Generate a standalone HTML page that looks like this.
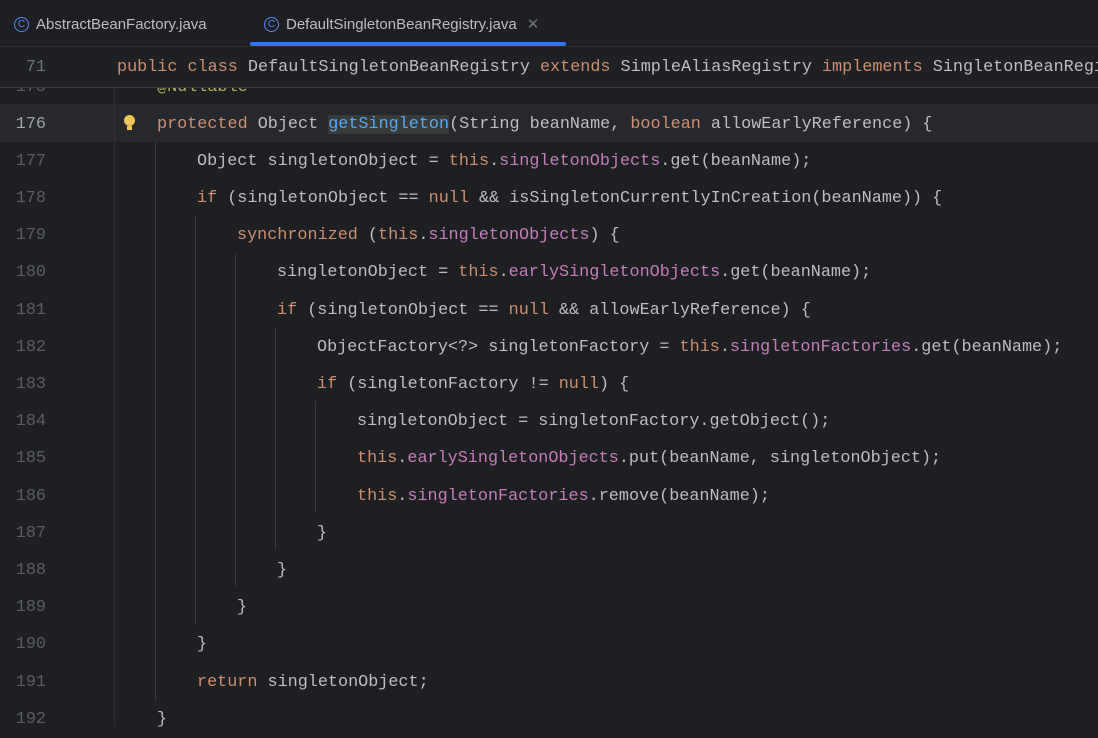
<!DOCTYPE html>
<html><head><meta charset="utf-8"><style>
body{margin:0;width:1098px;height:726px;overflow:hidden;background:#1e1f22;font-family:"Liberation Mono",monospace;}
.tabs{position:absolute;left:0;top:0;width:1098px;height:46px;background:#1e1f22;border-bottom:1px solid #2b2d30;font-family:"Liberation Sans",sans-serif;font-size:15px;color:#bcbec4;}
.tab{position:absolute;top:14px;white-space:nowrap;display:flex;align-items:center;height:20px}
.ic{display:inline-block;width:13px;height:13px;border:1.5px solid #548af7;border-radius:50%;font-size:10px;line-height:13px;text-align:center;color:#548af7;margin-right:7px;box-sizing:content-box}
.ul{position:absolute;left:250px;top:42px;width:316px;height:4px;background:#3574f0;border-radius:2px}
.ed{position:absolute;left:0;top:47px;width:1098px;height:679px;background:#1e1f22}
.sticky{position:absolute;left:0;top:47px;width:1098px;height:40px;background:#1f2023;border-bottom:1px solid #393b40;z-index:3}
.ln{position:absolute;left:0;width:46px;text-align:right;color:#5a5d63;font-size:16.8px;line-height:37px}
.code{position:absolute;white-space:pre;color:#bcbec4;font-size:16.8px;line-height:37px}
.k{color:#cf8e6d}.f{color:#c77dbb}.m{color:#56a8f5}.a{color:#b3ae60}
.g{position:absolute;width:1px;background:#393b40}
.r{position:absolute;left:0;top:1px;width:1098px;height:726px}
</style></head><body>
<div class="ed"></div>
<div style="position:absolute;left:0;top:104px;width:1098px;height:38px;background:#26282e"></div>
<div class="g" style="left:114px;top:47px;height:679px;background:#2e3035"></div>
<div class="g" style="left:155px;top:142px;height:558px"></div>
<div class="g" style="left:195px;top:216px;height:408px"></div>
<div class="g" style="left:235px;top:253px;height:334px"></div>
<div class="g" style="left:275px;top:327px;height:223px"></div>
<div class="g" style="left:315px;top:401px;height:112px"></div>

<div class="tabs">
<div class="tab" style="left:14px"><span class="ic">C</span>AbstractBeanFactory.java</div>
<div class="tab" style="left:264px"><span class="ic">C</span>DefaultSingletonBeanRegistry.java <span style="color:#6f737a;margin-left:10px">✕</span></div>
<div class="ul"></div>
</div>

<div class="sticky">
<div class="ln" style="top:2px;color:#6f737a">71</div>
<div class="code" style="left:117px;top:2px"><span class="k">public class</span> DefaultSingletonBeanRegistry <span class="k">extends</span> SimpleAliasRegistry <span class="k">implements</span> SingletonBeanRegistry</div>
</div>

<div class="r">
<div class="ln" style="top:68px">175</div>
<div class="code a" style="left:157px;top:68px">@Nullable</div>

<div class="ln" style="top:104.5px;color:#a1a3ab">176</div>
<div style="position:absolute;left:124px;top:114px;width:11px;height:11px;border-radius:50%;background:#f2c55c"></div>
<div style="position:absolute;left:127px;top:125px;width:5px;height:4px;background:#f2c55c"></div>
<div class="code" style="left:157px;top:104.5px"><span class="k">protected</span> Object <span class="m" style="background:#373b39">getSingleton</span>(String beanName, <span class="k">boolean</span> allowEarlyReference) {</div>

<div class="ln" style="top:141.7px">177</div>
<div class="code" style="left:197px;top:141.7px">Object singletonObject = <span class="k">this</span>.<span class="f">singletonObjects</span>.get(beanName);</div>
<div class="ln" style="top:178.9px">178</div>
<div class="code" style="left:197px;top:178.9px"><span class="k">if</span> (singletonObject == <span class="k">null</span> &amp;&amp; isSingletonCurrentlyInCreation(beanName)) {</div>
<div class="ln" style="top:216.1px">179</div>
<div class="code" style="left:237px;top:216.1px"><span class="k">synchronized</span> (<span class="k">this</span>.<span class="f">singletonObjects</span>) {</div>
<div class="ln" style="top:253.3px">180</div>
<div class="code" style="left:277px;top:253.3px">singletonObject = <span class="k">this</span>.<span class="f">earlySingletonObjects</span>.get(beanName);</div>
<div class="ln" style="top:290.5px">181</div>
<div class="code" style="left:277px;top:290.5px"><span class="k">if</span> (singletonObject == <span class="k">null</span> &amp;&amp; allowEarlyReference) {</div>
<div class="ln" style="top:327.7px">182</div>
<div class="code" style="left:317px;top:327.7px">ObjectFactory&lt;?&gt; singletonFactory = <span class="k">this</span>.<span class="f">singletonFactories</span>.get(beanName);</div>
<div class="ln" style="top:364.9px">183</div>
<div class="code" style="left:317px;top:364.9px"><span class="k">if</span> (singletonFactory != <span class="k">null</span>) {</div>
<div class="ln" style="top:402.1px">184</div>
<div class="code" style="left:357px;top:402.1px">singletonObject = singletonFactory.getObject();</div>
<div class="ln" style="top:439.3px">185</div>
<div class="code" style="left:357px;top:439.3px"><span class="k">this</span>.<span class="f">earlySingletonObjects</span>.put(beanName, singletonObject);</div>
<div class="ln" style="top:476.5px">186</div>
<div class="code" style="left:357px;top:476.5px"><span class="k">this</span>.<span class="f">singletonFactories</span>.remove(beanName);</div>
<div class="ln" style="top:513.7px">187</div>
<div class="code" style="left:317px;top:513.7px">}</div>
<div class="ln" style="top:550.9px">188</div>
<div class="code" style="left:277px;top:550.9px">}</div>
<div class="ln" style="top:588.1px">189</div>
<div class="code" style="left:237px;top:588.1px">}</div>
<div class="ln" style="top:625.3px">190</div>
<div class="code" style="left:197px;top:625.3px">}</div>
<div class="ln" style="top:662.5px">191</div>
<div class="code" style="left:197px;top:662.5px"><span class="k">return</span> singletonObject;</div>
<div class="ln" style="top:699.7px">192</div>
<div class="code" style="left:157px;top:699.7px">}</div>
</div>
</body></html>
